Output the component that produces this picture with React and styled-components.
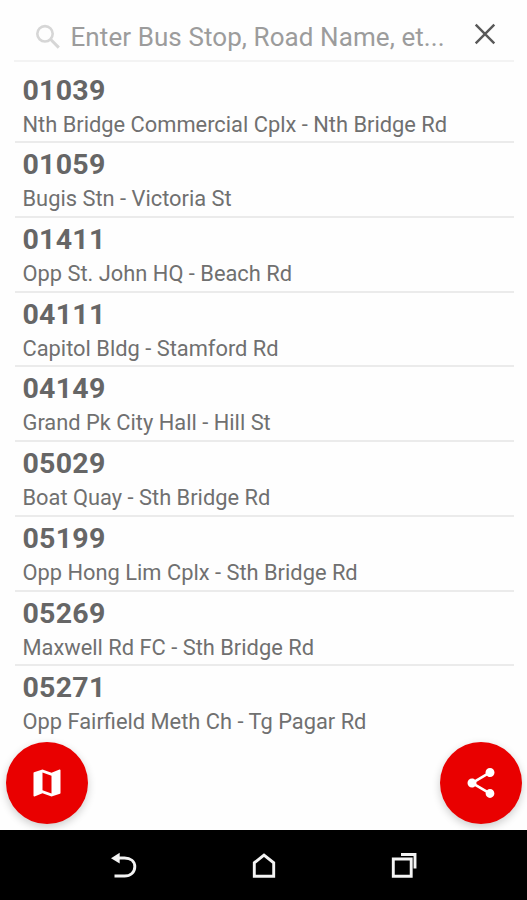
import React from 'react';
import styled, { createGlobalStyle } from 'styled-components';
import { MdMap, MdShare } from 'react-icons/md';

const GlobalStyle = createGlobalStyle`
    * {
        box-sizing: border-box;
    }
    body {
        margin: 0;
        background: #fefefe;
        font-family: Roboto, "Liberation Sans", sans-serif;
    }
`;

const Screen = styled.div`
    display: flex;
    flex-direction: column;
    position: relative;
    width: 527px;
    height: 900px;
    overflow: hidden;
    background: #fefefe;
`;

const SearchBar = styled.header`
    display: flex;
    align-items: center;
    height: 62px;
    margin: 0 13px 0 14px;
    padding: 13px 16px 0 21px;
    border-bottom: 2px solid #f3f3f3;
`;

const Placeholder = styled.div`
    flex: 1;
    margin-left: 9.5px;
    color: #9c9c9c;
    font-size: 26px;
    line-height: 32px;
    letter-spacing: .08px;
    white-space: nowrap;
`;

const CloseIcon = styled.svg`
    margin-top: -6px;
`;

const StopList = styled.ul`
    flex: 1;
    min-height: 0;
    margin: 0 13px 0 15px;
    padding: 6.7px 0 0;
    list-style: none;
`;

const Stop = styled.li`
    height: 74.7px;
    padding: 5px 8px 0;
    border-bottom: 2px solid #ebebeb;

    &:last-child {
        border-bottom: none;
    }
`;

const Code = styled.div`
    margin-left: -.5px;
    color: #666;
    font-size: 28.5px;
    font-weight: 700;
    line-height: 34px;
    letter-spacing: .25px;
`;

const Name = styled.div`
    margin: 3px 0 0 -.5px;
    color: #707070;
    font-size: 21.85px;
    line-height: 28px;
    white-space: nowrap;
`;

const FloatingButton = styled.button`
    position: absolute;
    bottom: 75.6px;
    ${props => props.$side}: ${props => props.$offset}px;
    display: flex;
    align-items: center;
    justify-content: center;
    width: 82px;
    height: 82px;
    padding: 0;
    border: none;
    border-radius: 50%;
    background: #e90000;
    color: #fff;
    box-shadow: 0 3px 8px rgba(0, 0, 0, .2);
`;

const NavBar = styled.nav`
    position: relative;
    display: flex;
    align-items: center;
    justify-content: space-between;
    height: 70px;
    padding: 1px 108px 0 109px;
    background: #000;
`;

const NavIcon = styled.svg`
    fill: none;
    stroke: #f4f4f4;
    stroke-width: 2.9;
`;

const stops = [
    { code: '01039', name: 'Nth Bridge Commercial Cplx - Nth Bridge Rd' },
    { code: '01059', name: 'Bugis Stn - Victoria St' },
    { code: '01411', name: 'Opp St. John HQ - Beach Rd' },
    { code: '04111', name: 'Capitol Bldg - Stamford Rd' },
    { code: '04149', name: 'Grand Pk City Hall - Hill St' },
    { code: '05029', name: 'Boat Quay - Sth Bridge Rd' },
    { code: '05199', name: 'Opp Hong Lim Cplx - Sth Bridge Rd' },
    { code: '05269', name: 'Maxwell Rd FC - Sth Bridge Rd' },
    { code: '05271', name: 'Opp Fairfield Meth Ch - Tg Pagar Rd' },
];

const App = () => (
    <Screen>
        <GlobalStyle />
        <SearchBar>
            <svg width="26" height="26" viewBox="0 0 26 26" fill="none" stroke="#d6d6d6" strokeWidth="2.6">
                <circle cx="10" cy="9.8" r="7.7" />
                <path d="M15.5 15.3L23.8 23.6" strokeWidth="3" />
            </svg>
            <Placeholder>Enter Bus Stop, Road Name, et...</Placeholder>
            <CloseIcon width="25" height="24" viewBox="0 0 25 24" fill="none" stroke="#595959" strokeWidth="2.4">
                <path d="M2.7 2.7L21.3 21.3M21.3 2.7L2.7 21.3" />
            </CloseIcon>
        </SearchBar>
        <StopList>
            {stops.map(stop => (
                <Stop key={stop.code}>
                    <Code>{stop.code}</Code>
                    <Name>{stop.name}</Name>
                </Stop>
            ))}
        </StopList>
        <NavBar>
            <NavIcon width="30" height="30" viewBox="0 0 30 30">
                <path d="M5.5 25H15.5C21.5 25 25.8 21.3 25.8 15.8S21.5 7 15.5 7H9" />
                <path d="M2 7.2L10.7 1.8V12.4Z" fill="#f4f4f4" stroke="none" />
            </NavIcon>
            <NavIcon width="30" height="30" viewBox="0 0 30 30">
                <path d="M5.3 25.2V11.8L15 4L24.7 11.8V25.2Z" />
            </NavIcon>
            <NavIcon width="30" height="30" viewBox="0 0 30 30">
                <path d="M4.3 8H22.2V25.2H4.3ZM12 3.5H26V17.5" />
            </NavIcon>
        </NavBar>
        <FloatingButton $side="left" $offset={6.4} aria-label="Map">
            <MdMap size={36} />
        </FloatingButton>
        <FloatingButton $side="right" $offset={5.2} aria-label="Share">
            <MdShare size={36} />
        </FloatingButton>
    </Screen>
);

export default App;
